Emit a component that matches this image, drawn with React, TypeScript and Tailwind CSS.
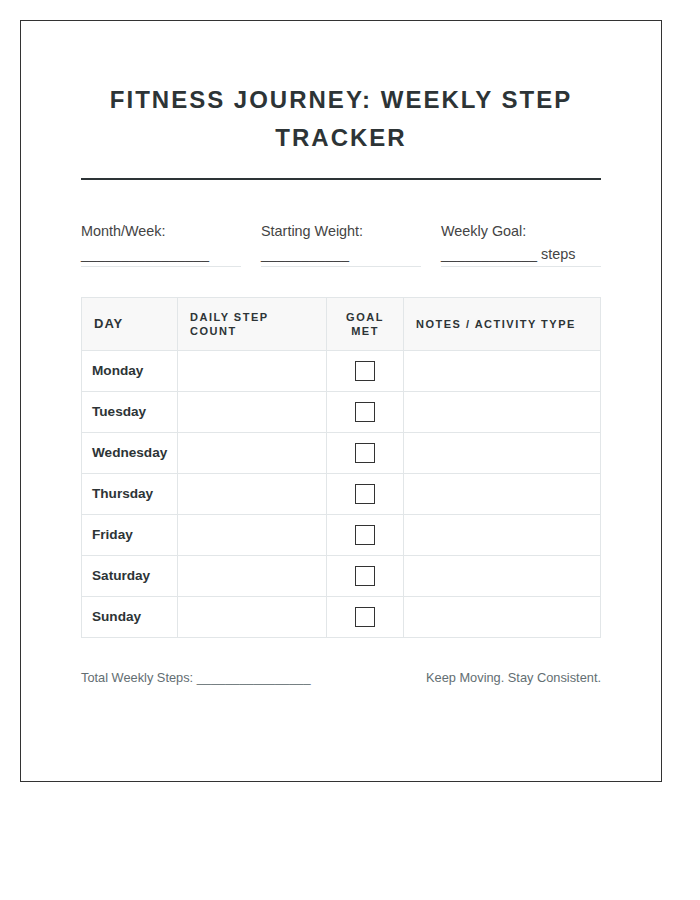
const days = ["Monday", "Tuesday", "Wednesday", "Thursday", "Friday", "Saturday", "Sunday"];

const fields = [
  { label: "Month/Week:", line: "________________", suffix: "" },
  { label: "Starting Weight:", line: "___________", suffix: "" },
  { label: "Weekly Goal:", line: "____________", suffix: " steps" },
];

export default function App() {
  return (
    <div className="bg-white p-5 font-['Liberation_Sans',Arial,sans-serif] text-[#2d3436]">
      <div className="h-[762px] w-[642px] border border-[#333] bg-white p-[60px]">
        {/* header */}
        <div className="border-b-2 border-[#2d3436] pb-5 text-center">
          <h1 className="text-[24px] font-bold uppercase leading-[1.6] tracking-[2px]">
            Fitness Journey: Weekly Step Tracker
          </h1>
        </div>

        {/* info fields */}
        <div className="mt-10 grid grid-cols-3 gap-5">
          {fields.map((f) => (
            <div key={f.label} className="border-b border-[#e2e6e8] text-[14.4px] leading-[23px] text-[#444]">
              <div>{f.label}</div>
              <div>
                {f.line}
                {f.suffix}
              </div>
            </div>
          ))}
        </div>

        {/* table */}
        <table className="mt-[30px] w-full table-fixed border-collapse">
          <colgroup>
            <col className="w-[96px]" />
            <col className="w-[149px]" />
            <col className="w-[77px]" />
            <col />
          </colgroup>
          <thead>
            <tr className="bg-[#f8f8f8]">
              <th className="border border-[#e2e6e8] px-3 py-3 text-left text-[13px] font-bold uppercase leading-[14px] tracking-[1px]">
                Day
              </th>
              <th className="border border-[#e2e6e8] px-3 py-3 text-left text-[11px] font-bold uppercase leading-[14px] tracking-[1.5px]">
                Daily Step Count
              </th>
              <th className="border border-[#e2e6e8] px-3 py-3 text-center text-[11px] font-bold uppercase leading-[14px] tracking-[1.5px]">
                Goal Met
              </th>
              <th className="border border-[#e2e6e8] px-3 py-3 text-left text-[11px] font-bold uppercase leading-[14px] tracking-[1.5px]">
                Notes / Activity Type
              </th>
            </tr>
          </thead>
          <tbody>
            {days.map((d) => (
              <tr key={d}>
                <td className="border border-[#e2e6e8] px-2.5 py-2.5 text-[13.6px] font-bold leading-5">{d}</td>
                <td className="border border-[#e2e6e8]"></td>
                <td className="border border-[#e2e6e8] py-2.5">
                  <div className="mx-auto h-5 w-5 border border-[#333]" />
                </td>
                <td className="border border-[#e2e6e8]"></td>
              </tr>
            ))}
          </tbody>
        </table>

        {/* footer */}
        <div className="mt-[30px] flex justify-between text-[12.8px] leading-5 text-[#636e72]">
          <span>Total Weekly Steps: ________________</span>
          <span>Keep Moving. Stay Consistent.</span>
        </div>
      </div>
    </div>
  );
}
